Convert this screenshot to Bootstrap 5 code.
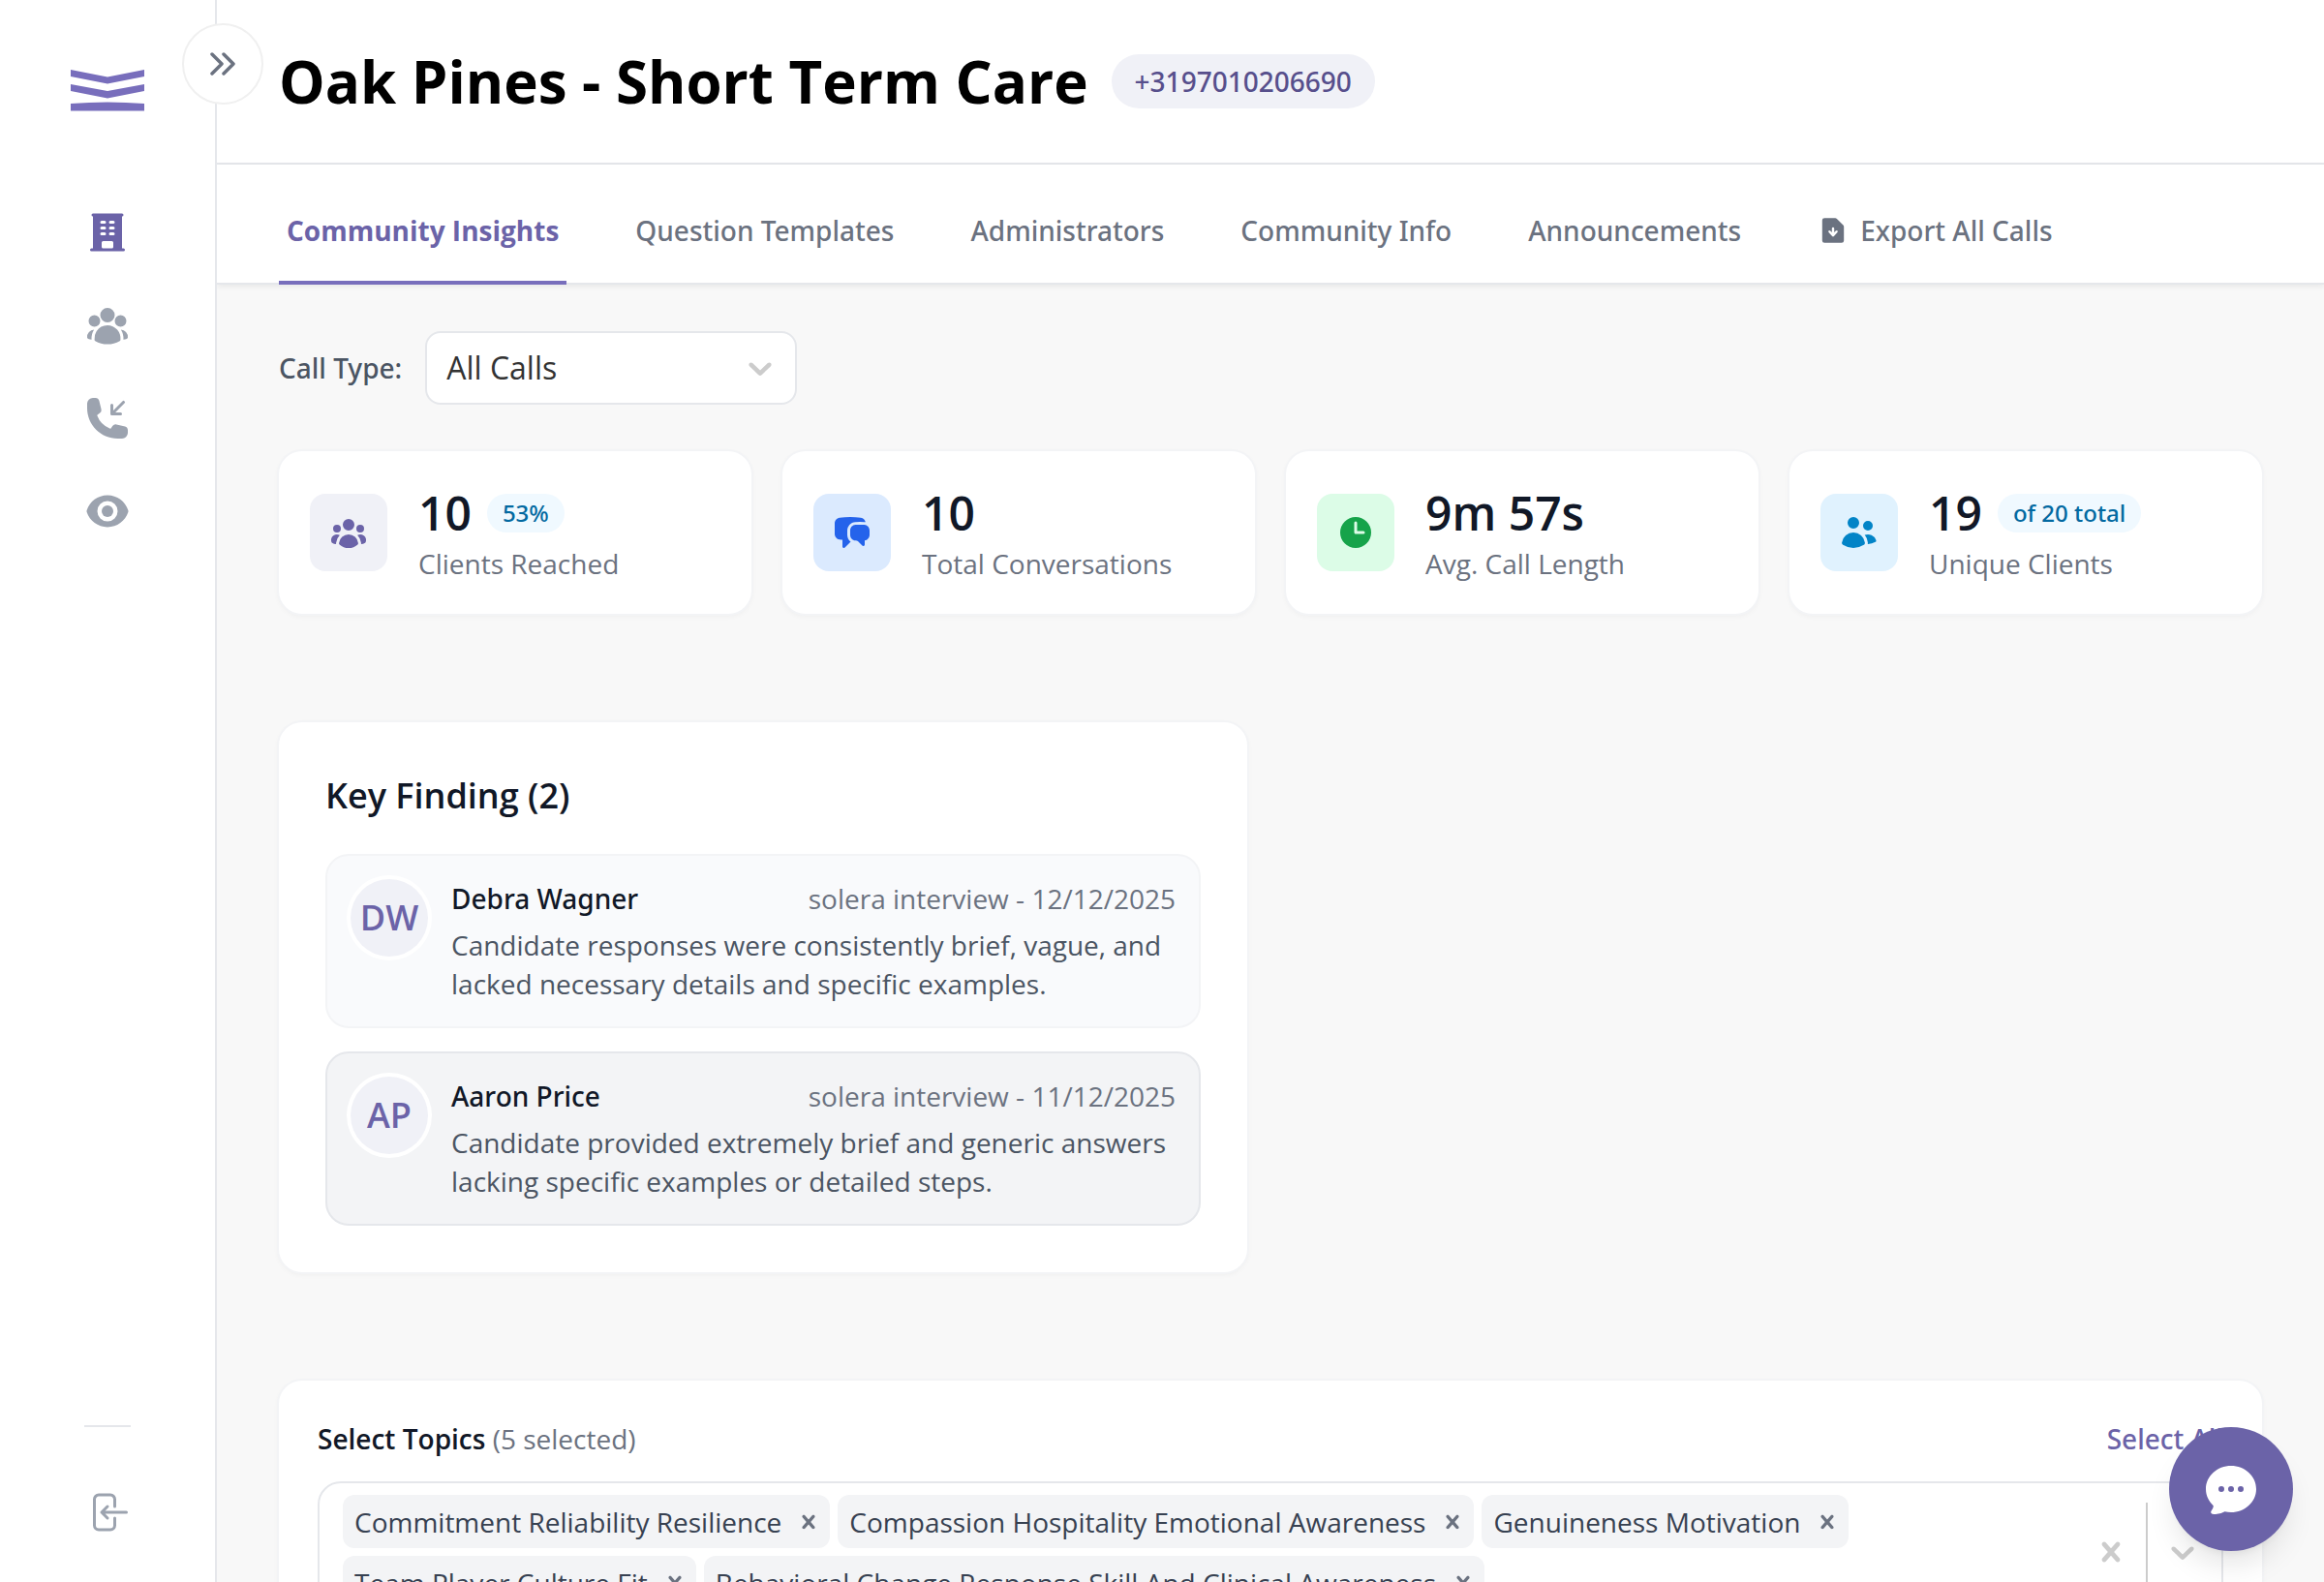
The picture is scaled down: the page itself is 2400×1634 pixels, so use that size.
<!DOCTYPE html>
<html lang="en">
<head>
<meta charset="utf-8">
<meta name="viewport" content="width=device-width, initial-scale=1">
<title>Oak Pines - Short Term Care</title>
<link rel="stylesheet" href="https://cdn.jsdelivr.net/npm/bootstrap@5.3.0/dist/css/bootstrap.min.css">
<style>
  :root { --brand: #6b63a8; --brand-line: #786ebc; --ink: #111827; --slate: #4b5563; --muted: #6b7280; --line: #e5e7eb; --soft: #f3f4f6; --tint: #f0f1f7; }
  body { font-family: "Open Sans", "Noto Sans", sans-serif; font-size: 28px; line-height: 40px; color: var(--ink); background: #f8f8f8; }
  /* Open Sans has no medium cut here; its sibling Noto Sans supplies weight 500 */
  .phone-pill, .tab-strip .nav-link:not(.active), .filter-row label, .stat-pill, .finding-name, .select-all { font-family: "Noto Sans", "Open Sans", sans-serif; font-weight: 500; }
  svg { display: block; flex: none; }
  .app-shell { height: 100vh; }
  .side-rail { flex: 0 0 224px; border-right: 2px solid var(--line); background: #fff; padding: 72px 0 48px; }
  .side-rail .rail-nav { margin-top: 101px; gap: 48px; }
  .side-rail a { color: #9ca3af; }
  .side-rail a.active { color: var(--brand); }
  .rail-rule { width: 48px; height: 2px; background: var(--line); margin-bottom: 64px; }
  .rail-toggle { position: absolute; top: 24px; left: 188px; width: 84px; height: 84px; border: 2px solid #f0f0f0; background: #fff; color: var(--muted); z-index: 5; }
  .main-pane { min-width: 0; overflow-y: auto; scrollbar-width: none; }
  .main-pane::-webkit-scrollbar { display: none; }
  .page-head { padding: 48px 64px; border-bottom: 2px solid var(--line); gap: 24px; }
  .page-head h1 { font-size: 60px; line-height: 72px; font-weight: 700; color: #000; }
  .phone-pill { padding: 8px 24px; border-radius: 28px; background: var(--tint); color: #574f8c; }
  .tab-strip { padding: 16px 64px 0; gap: 63px; border-bottom: 2px solid var(--line); box-shadow: 0 2px 6px rgba(0,0,0,.07); }
  .tab-strip .nav-link { padding: 32px 8px; margin-bottom: -2px; border-bottom: 4px solid transparent; color: var(--muted); }
  .tab-strip .nav-link.active { color: var(--brand); font-weight: 700; border-color: var(--brand-line); }
  .tab-strip .tab-export { gap: 12px; }
  .content-pad { padding: 48px 64px; }
  .filter-row { gap: 24px; margin-bottom: 48px; }
  .filter-row label { color: var(--slate); }
  .call-select { appearance: none; width: 384px; height: 76px; padding: 0 76px 0 20px; border: 2px solid var(--line); border-radius: 16px; background: #fff; font-size: 32px; line-height: 44px; color: #333; }
  .select-arrow { top: 18px; right: 18px; color: #ccc; pointer-events: none; }
  .panel { background: #fff; border-radius: 24px; box-shadow: 0 0 0 2px var(--soft), 0 2px 6px rgba(0,0,0,.05); }
  .stat-grid { --bs-gutter-x: 32px; --bs-gutter-y: 32px; margin-bottom: 112px; }
  .stat-tile { padding: 32px; gap: 32px; }
  .stat-icon { width: 80px; height: 80px; border-radius: 16px; flex: none; }
  .stat-value { font-size: 48px; line-height: 64px; font-weight: 600; }
  .stat-pill { font-size: 24px; line-height: 32px; padding: 4px 16px; border-radius: 20px; background: #f0f9ff; color: #0369a1; }
  .stat-label { color: var(--muted); }
  .tone-brand { background: var(--tint); color: var(--brand); }
  .tone-blue { background: #dbeafe; color: #2563eb; }
  .tone-green { background: #dcfce7; color: #16a34a; }
  .tone-sky { background: #e0f2fe; color: #0284c7; }
  .finding-grid { --bs-gutter-x: 48px; margin-bottom: 112px; }
  .finding-panel { padding: 48px; }
  .finding-panel h2 { font-size: 36px; line-height: 56px; font-weight: 600; margin-bottom: 32px; }
  .finding-list { gap: 24px; }
  .finding { padding: 24px; gap: 24px; border: 2px solid var(--soft); border-radius: 24px; background: #f9fafc; }
  .finding.active { background: var(--soft); border-color: var(--line); }
  .avatar { width: 80px; height: 80px; flex: none; background: var(--tint); box-shadow: 0 0 0 4px #fff; color: var(--brand); font-size: 36px; font-weight: 600; }
  .finding-date { color: var(--muted); }
  .finding-text { color: var(--slate); margin: 8px 0 0; }
  .topics-panel { padding: 40px; }
  .topics-head { margin-bottom: 24px; }
  .topics-head h2 { font-size: 28px; line-height: 40px; font-weight: 600; }
  .topics-head h2 span { font-weight: 400; color: var(--muted); }
  .plain-btn { border: 0; background: none; padding: 0; color: inherit; }
  .plain-btn.select-all { color: var(--brand); }
  .multi-box { border: 2px solid var(--line); border-radius: 24px; }
  .chip-list { padding: 12px 24px; gap: 8px; }
  .chip { height: 55px; padding: 0 8px 0 12px; gap: 14px; border-radius: 12px; background: var(--soft); color: #374151; }
  .chip button { color: var(--muted); }
  .multi-tools { color: #ccc; }
  .multi-rule { width: 2px; margin: 20px 0; background: #ccc; }
  .chat-fab { position: fixed; right: 32px; bottom: 32px; width: 128px; height: 128px; border: 0; background: var(--brand); color: #fff; box-shadow: 0 20px 30px -6px rgba(0,0,0,.1), 0 8px 12px -8px rgba(0,0,0,.1); z-index: 10; }
</style>
<script src="https://cdn.jsdelivr.net/npm/bootstrap@5.3.0/dist/js/bootstrap.bundle.min.js"></script>
</head>
<body>
<svg class="d-none" aria-hidden="true">
  <symbol id="i-x" viewBox="0 0 20 20"><path d="M14.348 14.849c-0.469 0.469-1.229 0.469-1.697 0l-2.651-3.030-2.651 3.029c-0.469 0.469-1.229 0.469-1.697 0-0.469-0.469-0.469-1.229 0-1.697l2.758-3.15-2.759-3.152c-0.469-0.469-0.469-1.228 0-1.697s1.228-0.469 1.697 0l2.652 3.031 2.651-3.031c0.469-0.469 1.228-0.469 1.697 0s0.469 1.229 0 1.697l-2.758 3.152 2.758 3.15c0.469 0.469 0.469 1.229 0 1.698z"/></symbol>
  <symbol id="i-down" viewBox="0 0 20 20"><path d="M4.516 7.548c0.436-0.446 1.043-0.481 1.576 0l3.908 3.747 3.908-3.747c0.533-0.481 1.141-0.446 1.574 0 0.436 0.445 0.408 1.197 0 1.615-0.406 0.418-4.695 4.502-4.695 4.502-0.217 0.223-0.502 0.335-0.787 0.335s-0.57-0.112-0.789-0.335c0 0-4.287-4.084-4.695-4.502s-0.436-1.17 0-1.615z"/></symbol>
</svg>

<div class="app-shell d-flex position-relative overflow-hidden">
  <aside class="side-rail d-flex flex-column align-items-center">
    <svg width="76" height="43" viewBox="0 0 76 43" fill="#786ebc"><path d="M0 0L38 7.500L76 0V7L38 14.500L0 7zM0 15L38 22L76 15V22L38 29.500L0 22zM0 35Q38 32 76 35V42.500H0z"/></svg>
    <nav class="rail-nav d-flex flex-column align-items-center" aria-label="Main">
      <a href="#" class="active" aria-label="Communities"><svg width="48" height="48" viewBox="0 0 24 24" fill="currentColor"><path fill-rule="evenodd" d="M4.5 2.25a.75.75 0 000 1.5v16.5h-.75a.75.75 0 000 1.500h16.500a.75.75 0 000-1.500h-.75V3.750a.75.75 0 000-1.500h-15zM9 6a.75.75 0 000 1.500h1.500a.75.75 0 000-1.500H9zm-.75 3.750A.75.75 0 019 9h1.500a.75.75 0 010 1.500H9a.75.75 0 01-.75-.75zM9 12a.75.75 0 000 1.500h1.500a.75.75 0 000-1.500H9zm3.750-5.250A.75.75 0 0113.500 6H15a.75.75 0 010 1.500h-1.500a.75.75 0 01-.75-.75zM13.500 9a.75.75 0 000 1.500H15A.75.75 0 0015 9h-1.500zm-.75 3.750a.75.75 0 01.75-.75H15a.75.75 0 010 1.500h-1.500a.75.75 0 01-.75-.75zM9 19.500v-2.250a.75.75 0 01.75-.75h4.500a.75.75 0 01.75.75v2.250a.75.75 0 01-.75.75h-4.500A.75.75 0 019 19.500z"/></svg></a>
      <a href="#" aria-label="Clients"><svg width="48" height="48" viewBox="0 0 24 24" fill="currentColor"><path fill-rule="evenodd" d="M8.25 6.75a3.75 3.75 0 117.5 0 3.75 3.75 0 01-7.5 0zM15.75 9.75a3 3 0 116 0 3 3 0 01-6 0zM2.25 9.75a3 3 0 116 0 3 3 0 01-6 0zM6.31 15.117A6.745 6.745 0 0112 12a6.745 6.745 0 016.709 7.498.75.75 0 01-.372.568A12.696 12.696 0 0112 21.75c-2.305 0-4.47-.612-6.337-1.684a.75.75 0 01-.372-.568 6.787 6.787 0 011.019-4.38z"/><path d="M5.082 14.254a8.287 8.287 0 00-1.308 5.135 9.687 9.687 0 01-1.764-.44l-.115-.04a.563.563 0 01-.373-.487l-.01-.121a3.75 3.75 0 013.57-4.047zM20.226 19.389a8.287 8.287 0 00-1.308-5.135 3.75 3.75 0 013.57 4.047l-.01.121a.563.563 0 01-.373.486l-.115.04c-.567.2-1.156.349-1.764.441z"/></svg></a>
      <a href="#" aria-label="Calls"><svg width="48" height="48" viewBox="0 0 24 24" fill="currentColor"><path d="M19.5 9.75a.75.75 0 01-.75.75h-4.5a.75.75 0 01-.75-.75v-4.5a.75.75 0 011.5 0v2.69l4.72-4.72a.75.75 0 111.06 1.06L16.06 9h2.69a.75.75 0 01.75.75z"/><path d="M1.5 4.5a3 3 0 013-3h1.372c.86 0 1.61.586 1.819 1.42l1.105 4.423a1.875 1.875 0 01-.694 1.955l-1.293.97c-.135.101-.164.249-.126.352a11.285 11.285 0 006.697 6.697c.103.038.25.009.352-.126l.97-1.293a1.875 1.875 0 011.955-.694l4.423 1.105c.834.209 1.42.959 1.42 1.82V19.5a3 3 0 01-3 3h-2.25C8.552 22.5 1.5 15.448 1.5 6.75V4.5z"/></svg></a>
      <a href="#" aria-label="Monitoring"><svg width="48" height="48" viewBox="0 0 24 24" fill="currentColor"><path d="M12 15a3 3 0 100-6 3 3 0 000 6z"/><path fill-rule="evenodd" d="M1.323 11.447C2.811 6.976 7.028 3.75 12.001 3.75c4.97 0 9.185 3.223 10.675 7.69.12.362.12.752 0 1.113-1.487 4.471-5.705 7.697-10.677 7.697-4.97 0-9.186-3.223-10.675-7.69a1.762 1.762 0 010-1.113zM17.25 12a5.25 5.25 0 11-10.5 0 5.25 5.25 0 0110.5 0z"/></svg></a>
    </nav>
    <div class="rail-rule mt-auto"></div>
    <a href="#" aria-label="Log out"><svg width="48" height="48" viewBox="0 0 24 24" fill="none" stroke="currentColor" stroke-width="1.5" stroke-linecap="round" stroke-linejoin="round"><path d="M15.75 9V5.25A2.25 2.25 0 0013.5 3h-6a2.25 2.25 0 00-2.25 2.25v13.5A2.25 2.25 0 007.5 21h6a2.25 2.25 0 002.25-2.25V15M12 9l-3 3m0 0l3 3m-3-3h12.75"/></svg></a>
  </aside>
  <button type="button" class="rail-toggle rounded-circle d-flex align-items-center justify-content-center p-0" aria-label="Expand sidebar"><svg width="26" height="24" viewBox="0 0 26 24" fill="none" stroke="currentColor" stroke-width="3.5" stroke-linecap="round" stroke-linejoin="round"><path d="M2 2l10 10L2 22M14 2l10 10-10 10"/></svg></button>

  <main class="main-pane flex-grow-1">
    <div class="bg-white">
      <header class="page-head d-flex align-items-center">
        <h1 class="mb-0">Oak Pines - Short Term Care</h1>
        <span class="phone-pill">+3197010206690</span>
      </header>
      <nav class="tab-strip nav flex-nowrap text-nowrap" aria-label="Community sections">
        <a class="nav-link active" aria-current="page" href="#">Community Insights</a>
        <a class="nav-link" href="#">Question Templates</a>
        <a class="nav-link" href="#">Administrators</a>
        <a class="nav-link" href="#">Community Info</a>
        <a class="nav-link" href="#">Announcements</a>
        <a class="nav-link tab-export d-flex align-items-center" href="#"><svg width="32" height="32" viewBox="0 0 20 20" fill="currentColor"><path fill-rule="evenodd" d="M4.5 2A1.5 1.5 0 003 3.5v13A1.5 1.5 0 004.5 18h11a1.5 1.5 0 001.5-1.5V7.621a1.5 1.5 0 00-.44-1.06l-4.12-4.122A1.5 1.5 0 0011.378 2H4.5zm4.75 6.75a.75.75 0 011.5 0v2.546l.943-1.048a.75.75 0 111.114 1.004l-2.25 2.5a.75.75 0 01-1.114 0l-2.25-2.5a.75.75 0 111.114-1.004l.943 1.048V8.75z"/></svg>Export All Calls</a>
      </nav>
    </div>

    <div class="content-pad">
      <div class="filter-row d-flex align-items-center">
        <label for="callType">Call Type:</label>
        <div class="position-relative">
          <select id="callType" class="call-select"><option>All Calls</option></select>
          <svg class="select-arrow position-absolute" width="40" height="40" fill="currentColor"><use href="#i-down"/></svg>
        </div>
      </div>

      <div class="stat-grid row row-cols-4">
        <div class="col"><div class="panel stat-tile d-flex align-items-center">
          <div class="stat-icon tone-brand d-flex align-items-center justify-content-center"><svg width="40" height="40" viewBox="0 0 20 20" fill="currentColor"><path d="M10 9a3 3 0 100-6 3 3 0 000 6zM6 8a2 2 0 11-4 0 2 2 0 014 0zM1.49 15.326a.78.78 0 01-.358-.442 3 3 0 014.308-3.516 6.484 6.484 0 00-1.905 3.959c-.023.222-.014.442.025.654a4.97 4.97 0 01-2.07-.655zM16.44 15.98a4.97 4.97 0 002.07-.654.78.78 0 00.357-.442 3 3 0 00-4.308-3.517 6.484 6.484 0 011.907 3.96 2.32 2.32 0 01-.026.654zM18 8a2 2 0 11-4 0 2 2 0 014 0zM5.304 16.19a.844.844 0 01-.277-.71 5 5 0 019.947 0 .843.843 0 01-.277.71A6.975 6.975 0 0110 18a6.974 6.974 0 01-4.696-1.81z"/></svg></div>
          <div><div class="d-flex align-items-center gap-3"><span class="stat-value">10</span><span class="stat-pill">53%</span></div><div class="stat-label">Clients Reached</div></div>
        </div></div>
        <div class="col"><div class="panel stat-tile d-flex align-items-center">
          <div class="stat-icon tone-blue d-flex align-items-center justify-content-center"><svg width="40" height="40" viewBox="0 0 20 20" fill="currentColor"><path d="M3.505 2.365A41.369 41.369 0 019 2c1.863 0 3.697.124 5.495.365 1.247.167 2.18 1.108 2.435 2.268a4.45 4.45 0 00-.577-.069 43.141 43.141 0 00-4.706 0C9.229 4.696 7.5 6.727 7.5 8.998v2.24c0 1.413.67 2.735 1.76 3.562l-2.98 2.98A.75.75 0 015 17.25v-3.443c-.501-.048-1-.106-1.495-.172C2.033 13.438 1 12.162 1 10.72V5.28c0-1.441 1.033-2.717 2.505-2.914z"/><path d="M14 6c-.762 0-1.52.02-2.271.062C10.157 6.148 9 7.472 9 8.998v2.24c0 1.519 1.147 2.839 2.71 2.935.214.013.428.024.642.034.2.009.385.09.518.224l2.35 2.35a.75.75 0 001.28-.531v-2.07c1.453-.195 2.5-1.463 2.5-2.915V8.998c0-1.526-1.157-2.85-2.729-2.936A41.645 41.645 0 0014 6z"/></svg></div>
          <div><div class="stat-value">10</div><div class="stat-label">Total Conversations</div></div>
        </div></div>
        <div class="col"><div class="panel stat-tile d-flex align-items-center">
          <div class="stat-icon tone-green d-flex align-items-center justify-content-center"><svg width="40" height="40" viewBox="0 0 20 20" fill="currentColor"><path fill-rule="evenodd" d="M10 18a8 8 0 100-16 8 8 0 000 16zm.75-13a.75.75 0 00-1.5 0v5c0 .414.336.75.75.75h4a.75.75 0 000-1.5h-3.25V5z"/></svg></div>
          <div><div class="stat-value">9m 57s</div><div class="stat-label">Avg. Call Length</div></div>
        </div></div>
        <div class="col"><div class="panel stat-tile d-flex align-items-center">
          <div class="stat-icon tone-sky d-flex align-items-center justify-content-center"><svg width="40" height="40" viewBox="0 0 20 20" fill="currentColor"><path d="M7 8a3 3 0 100-6 3 3 0 000 6zM14.5 9a2.5 2.5 0 100-5 2.5 2.5 0 000 5zM1.615 16.428a1.224 1.224 0 01-.569-1.175 6.002 6.002 0 0111.908 0c.058.467-.172.92-.57 1.174A9.953 9.953 0 017 18a9.953 9.953 0 01-5.385-1.572zM14.5 16h-.106c.07-.297.088-.611.048-.933a7.47 7.47 0 00-1.588-3.755 4.502 4.502 0 015.874 2.636.818.818 0 01-.36.98A7.465 7.465 0 0114.5 16z"/></svg></div>
          <div><div class="d-flex align-items-center gap-3"><span class="stat-value">19</span><span class="stat-pill">of 20 total</span></div><div class="stat-label">Unique Clients</div></div>
        </div></div>
      </div>

      <div class="finding-grid row">
        <div class="col-6">
          <section class="panel finding-panel">
            <h2>Key Finding (2)</h2>
            <div class="finding-list d-flex flex-column">
              <article class="finding d-flex">
                <div class="avatar rounded-circle d-flex align-items-center justify-content-center">DW</div>
                <div class="flex-grow-1">
                  <div class="d-flex justify-content-between"><span class="finding-name">Debra Wagner</span><span class="finding-date">solera interview - 12/12/2025</span></div>
                  <p class="finding-text">Candidate responses were consistently brief, vague, and lacked necessary details and specific examples.</p>
                </div>
              </article>
              <article class="finding active d-flex">
                <div class="avatar rounded-circle d-flex align-items-center justify-content-center">AP</div>
                <div class="flex-grow-1">
                  <div class="d-flex justify-content-between"><span class="finding-name">Aaron Price</span><span class="finding-date">solera interview - 11/12/2025</span></div>
                  <p class="finding-text">Candidate provided extremely brief and generic answers lacking specific examples or detailed steps.</p>
                </div>
              </article>
            </div>
          </section>
        </div>
      </div>

      <section class="panel topics-panel">
        <div class="topics-head d-flex justify-content-between align-items-center">
          <h2 class="mb-0">Select Topics <span>(5 selected)</span></h2>
          <button type="button" class="plain-btn select-all">Select All</button>
        </div>
        <div class="multi-box d-flex">
          <div class="chip-list d-flex flex-wrap flex-grow-1">
            <span class="chip d-flex align-items-center">Commitment Reliability Resilience<button type="button" class="plain-btn" aria-label="Remove Commitment Reliability Resilience"><svg width="28" height="28" fill="currentColor"><use href="#i-x"/></svg></button></span>
            <span class="chip d-flex align-items-center">Compassion Hospitality Emotional Awareness<button type="button" class="plain-btn" aria-label="Remove Compassion Hospitality Emotional Awareness"><svg width="28" height="28" fill="currentColor"><use href="#i-x"/></svg></button></span>
            <span class="chip d-flex align-items-center">Genuineness Motivation<button type="button" class="plain-btn" aria-label="Remove Genuineness Motivation"><svg width="28" height="28" fill="currentColor"><use href="#i-x"/></svg></button></span>
            <span class="chip d-flex align-items-center">Team Player Culture Fit<button type="button" class="plain-btn" aria-label="Remove Team Player Culture Fit"><svg width="28" height="28" fill="currentColor"><use href="#i-x"/></svg></button></span>
            <span class="chip d-flex align-items-center">Behavioral Change Response Skill And Clinical Awareness<button type="button" class="plain-btn" aria-label="Remove Behavioral Change Response Skill And Clinical Awareness"><svg width="28" height="28" fill="currentColor"><use href="#i-x"/></svg></button></span>
          </div>
          <div class="multi-tools d-flex">
            <button type="button" class="plain-btn px-3" aria-label="Clear all topics"><svg width="40" height="40" fill="currentColor"><use href="#i-x"/></svg></button>
            <div class="multi-rule"></div>
            <button type="button" class="plain-btn px-3 me-1" aria-label="Open topic list"><svg width="40" height="40" fill="currentColor"><use href="#i-down"/></svg></button>
          </div>
        </div>
      </section>
    </div>
  </main>

  <button type="button" class="chat-fab rounded-circle d-flex align-items-center justify-content-center p-0" aria-label="Open chat"><svg width="64" height="64" viewBox="0 0 24 24" fill="currentColor"><path fill-rule="evenodd" d="M4.804 21.644A6.707 6.707 0 006 21.75a6.721 6.721 0 003.583-1.029c.774.182 1.584.279 2.417.279 5.322 0 9.75-3.97 9.75-9 0-5.03-4.428-9-9.75-9s-9.75 3.97-9.75 9c0 2.409 1.025 4.587 2.674 6.192.232.226.277.428.254.543a3.73 3.73 0 01-.814 1.686.75.75 0 00.44 1.223zM8.25 10.875a1.125 1.125 0 100 2.25 1.125 1.125 0 000-2.25zM10.875 12a1.125 1.125 0 112.25 0 1.125 1.125 0 01-2.25 0zm4.875-1.125a1.125 1.125 0 100 2.25 1.125 1.125 0 000-2.25z"/></svg></button>
</div>
</body>
</html>
